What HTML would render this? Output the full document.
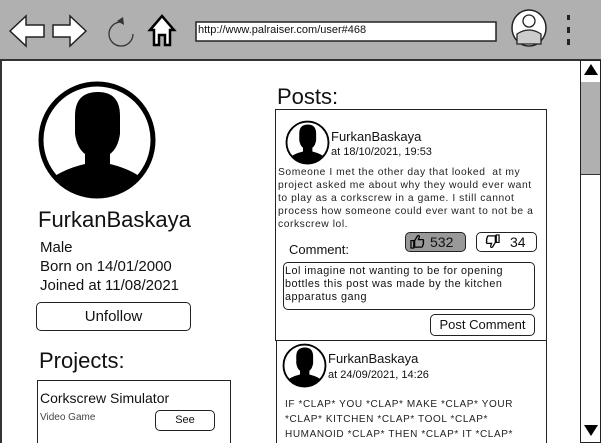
<!DOCTYPE html>
<html><head><meta charset="utf-8"><style>
body{margin:0;width:601px;height:443px;overflow:hidden;background:#fff;font-family:"Liberation Sans",sans-serif;color:#111;position:relative}
.a{position:absolute}
.box{position:absolute;border:1.5px solid #222;box-sizing:border-box;background:#fff}
.rb{border-radius:5px}
</style></head><body>
<svg width="0" height="0" style="position:absolute"><defs>
<clipPath id="cc"><circle cx="60" cy="60" r="56"/></clipPath>
<symbol id="av" viewBox="0 0 120 120"><circle cx="60" cy="60" r="56" fill="#fff" stroke="#000" stroke-width="5"/>
<g clip-path="url(#cc)" fill="#000"><path d="M38 36 Q38 12 61 12 Q83 12 83 36 L83 54 Q81 68 73 74 L73 84 Q98 90 112 104 L112 125 L8 125 L8 104 Q22 90 48 84 L48 74 Q40 68 38 54Z"/></g></symbol>
<symbol id="tu" viewBox="0 0 16 16"><path d="M1 7 H4 V15 H1Z M5 7 L8 2 Q10 1 10 3 L9 6 H14 Q15 7 14 8 Q15 9 14 10 Q15 11 13.5 12 Q14 14 12 14 H5Z" fill="none" stroke="#000" stroke-width="1.3"/></symbol>
<symbol id="td" viewBox="0 0 16 16"><g transform="rotate(180 8 8)"><path d="M1 7 H4 V15 H1Z M5 7 L8 2 Q10 1 10 3 L9 6 H14 Q15 7 14 8 Q15 9 14 10 Q15 11 13.5 12 Q14 14 12 14 H5Z" fill="none" stroke="#000" stroke-width="1.3"/></g></symbol>
</defs></svg>
<!-- top bar -->
<div class="a" style="left:0;top:0;width:601px;height:61px;background:#b0b0b0;border-bottom:2px solid #333;box-sizing:border-box"></div>
<svg class="a" style="left:0;top:0" width="601" height="61">
<path d="M10 31 L26 16 L26 25 L44 25 L44 37 L26 37 L26 46Z" fill="#fff" stroke="#222" stroke-width="1.5"/>
<path d="M86 31 L70 16 L70 25 L53 25 L53 37 L70 37 L70 46Z" fill="#fff" stroke="#222" stroke-width="1.5"/>
<path d="M121 22 A12 12 0 1 0 133 34" fill="none" stroke="#333" stroke-width="1.3"/><path d="M117 21 L123 17 L124 25Z" fill="#333"/>
<path d="M150 30 L162 16 L174 30 L170 30 L170 45 L165 45 L165 35 L159 35 L159 45 L154 45 L154 30Z" fill="#fff" stroke="#000" stroke-width="2.5"/>
<rect x="196" y="22" width="300" height="19" fill="#fff" stroke="#222" stroke-width="1.5"/>
<ellipse cx="529" cy="28" rx="17" ry="18" fill="#fff" stroke="#222" stroke-width="1.5"/>
<circle cx="529" cy="21" r="6" fill="#fff" stroke="#222" stroke-width="1.3"/>
<path d="M517 44 L517 34 Q529 26 541 34 L541 44Z" fill="#ccc" stroke="#222" stroke-width="1.3"/>
<rect x="567" y="15" width="3" height="5" fill="#222"/><rect x="567" y="27" width="3" height="6" fill="#222"/><rect x="567" y="39" width="3" height="6" fill="#222"/>
</svg>
<div class="a" style="left:198px;top:24px;font-size:11px">http://www.palraiser.com/user#468</div>
<!-- scrollbar -->
<div class="box" style="left:580px;top:60px;width:21px;height:383px;border-width:1px"></div>
<div class="a" style="left:581px;top:82px;width:19px;height:92px;background:#b0b0b0;border-bottom:1px solid #333"></div>
<div class="a" style="left:584px;top:64px;width:0;height:0;border-left:7px solid transparent;border-right:7px solid transparent;border-bottom:11px solid #000"></div>
<div class="a" style="left:584px;top:425px;width:0;height:0;border-left:7px solid transparent;border-right:7px solid transparent;border-top:11px solid #000"></div>
<div class="a" style="left:0;top:61px;width:1.5px;height:382px;background:#333"></div>
<!-- profile -->
<svg class="a" style="left:37px;top:80px" width="120" height="120"><use href="#av"/></svg>
<div class="a" style="left:38px;top:207px;font-size:22px">FurkanBaskaya</div>
<div class="a" style="left:40px;top:238px;font-size:15px;line-height:19px">Male<br>Born on 14/01/2000<br>Joined at 11/08/2021</div>
<div class="box rb" style="left:36px;top:302px;width:155px;height:29px;text-align:center;font-size:15px;line-height:27px">Unfollow</div>
<div class="a" style="left:39px;top:348px;font-size:22px">Projects:</div>
<div class="box" style="left:37px;top:380px;width:194px;height:63px;border-bottom:none"></div>
<div class="a" style="left:40px;top:390px;font-size:14px">Corkscrew Simulator</div>
<div class="a" style="left:40px;top:412px;font-size:10px;color:#444">Video Game</div>
<div class="box rb" style="left:155px;top:410px;width:60px;height:21px;font-size:11px;text-align:center;line-height:19px">See</div>
<!-- posts -->
<div class="a" style="left:277px;top:84px;font-size:22px">Posts:</div>
<div class="box" style="left:275px;top:109px;width:272px;height:232px"></div>
<svg class="a" style="left:285px;top:120px" width="45" height="45"><use href="#av"/></svg>
<div class="a" style="left:331px;top:129px;font-size:13px">FurkanBaskaya</div>
<div class="a" style="left:331px;top:146px;font-size:11px">at 18/10/2021, 19:53</div>
<div class="a" style="left:278px;top:166px;width:268px;font-size:10.3px;letter-spacing:0.55px;line-height:13px;color:#222;white-space:nowrap">Someone I met the other day that looked&nbsp; at my<br>project asked me about why they would ever want<br>to play as a corkscrew in a game. I still cannot<br>process how someone could ever want to not be a<br>corkscrew lol.</div>
<div class="box rb" style="left:405px;top:232px;width:61px;height:20px;background:#999;font-size:14px;line-height:18px;padding-left:24px">532</div>
<svg class="a" style="left:410px;top:234px" width="15" height="15"><use href="#tu"/></svg>
<div class="box rb" style="left:476px;top:232px;width:61px;height:20px;font-size:14px;line-height:18px;padding-left:33px">34</div>
<svg class="a" style="left:485px;top:234px" width="15" height="15"><use href="#td"/></svg>
<div class="a" style="left:289px;top:242px;font-size:13px">Comment:</div>
<div class="box rb" style="left:283px;top:262px;width:252px;height:48px;font-size:10.8px;letter-spacing:0.5px;line-height:13px;padding:2px 1px;white-space:nowrap">Lol imagine not wanting to be for opening<br>bottles this post was made by the kitchen<br>apparatus gang</div>
<div class="box rb" style="left:430px;top:314px;width:105px;height:22px;font-size:13px;text-align:center;line-height:20px">Post Comment</div>
<div class="box" style="left:276px;top:340px;width:271px;height:103px;border-bottom:none"></div>
<svg class="a" style="left:282px;top:343px" width="45" height="45"><use href="#av"/></svg>
<div class="a" style="left:328px;top:351px;font-size:13px">FurkanBaskaya</div>
<div class="a" style="left:328px;top:369px;font-size:11px">at 24/09/2021, 14:26</div>
<div class="a" style="left:285px;top:397px;width:260px;font-size:10px;letter-spacing:0.6px;line-height:15px;color:#222;white-space:nowrap">IF *CLAP* YOU *CLAP* MAKE *CLAP* YOUR<br>*CLAP* KITCHEN *CLAP* TOOL *CLAP*<br>HUMANOID *CLAP* THEN *CLAP* IT *CLAP*</div>
</body></html>
